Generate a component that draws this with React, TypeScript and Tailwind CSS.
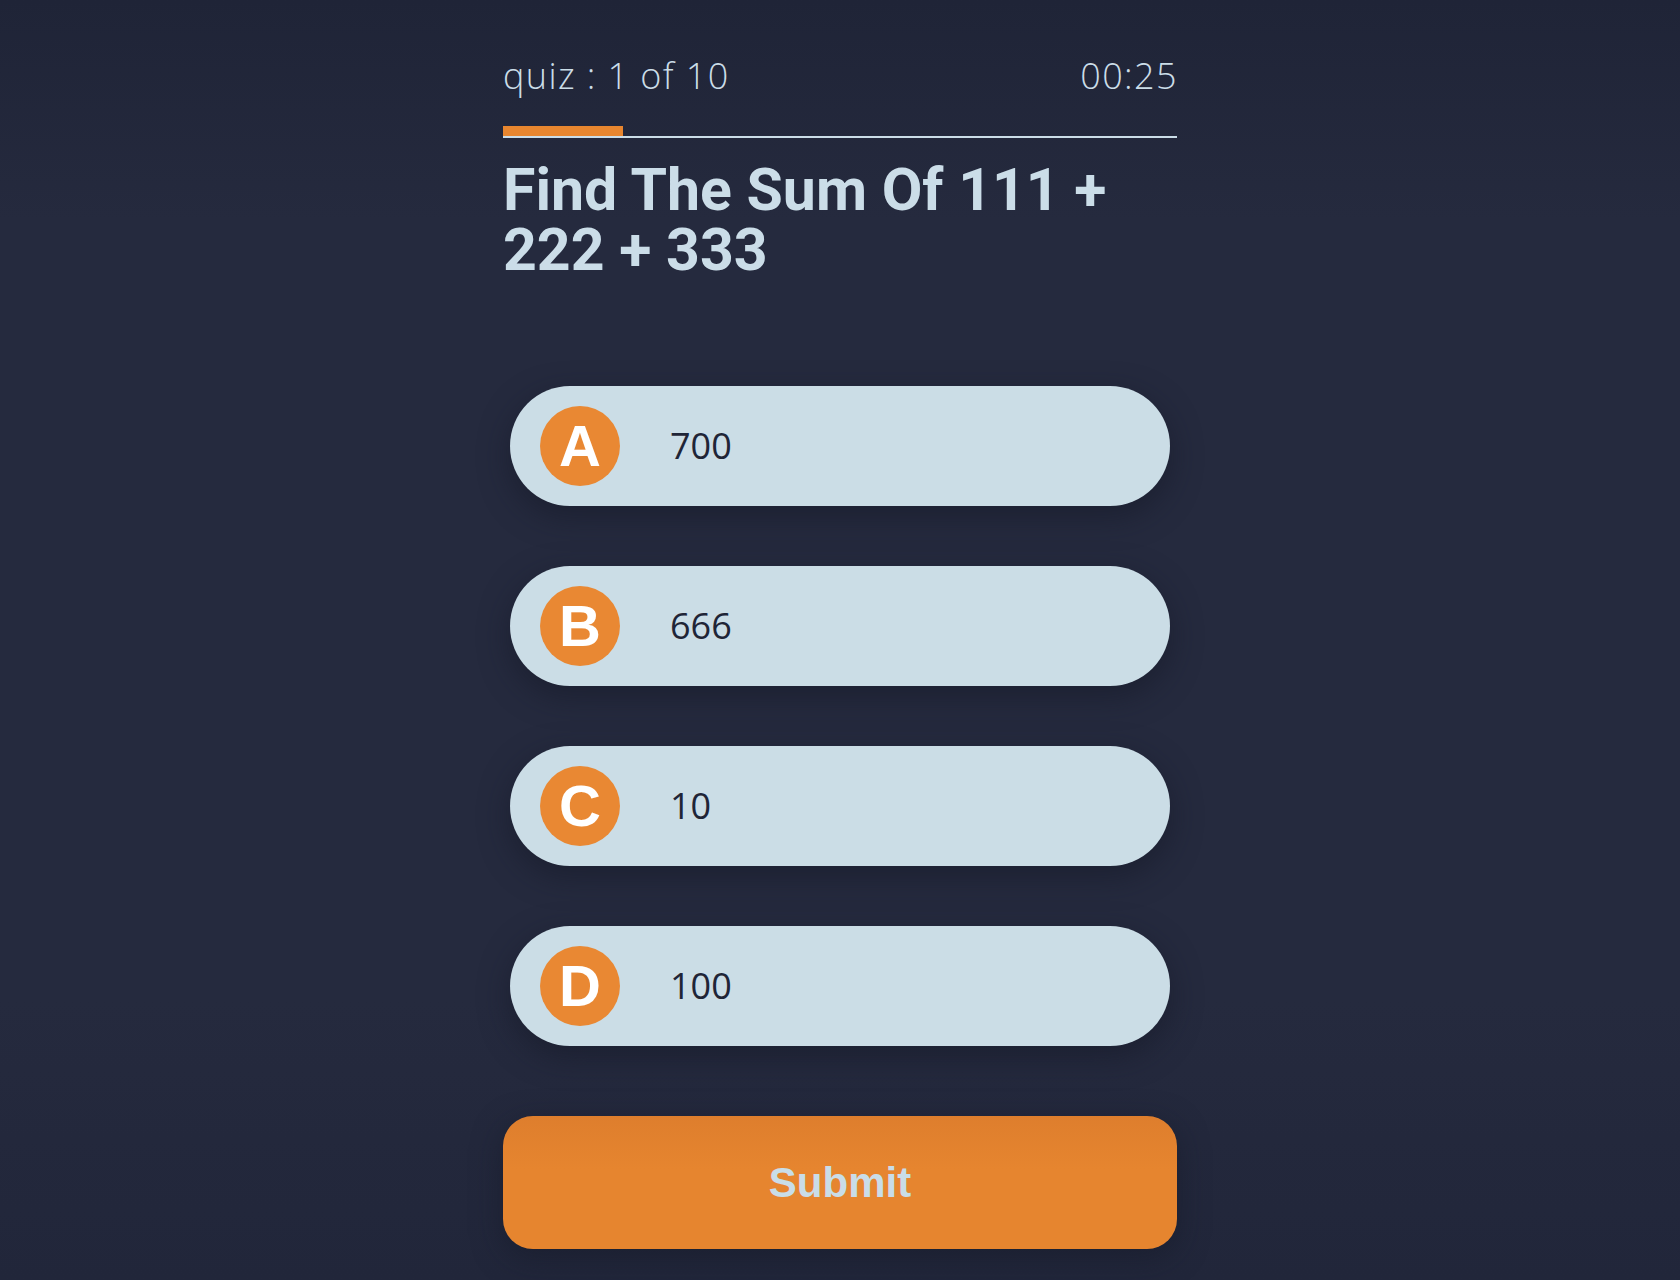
import React from "react"

const options = [
  { key: "A", text: "700" },
  { key: "B", text: "666" },
  { key: "C", text: "10" },
  { key: "D", text: "100" },
]

function Option({ letter, text }: { letter: string; text: string }) {
  return (
    <div className="flex items-center h-[120px] w-[660px] mx-auto pl-[30px] rounded-[60px] bg-[#cbdde6] shadow-[0_10px_30px_rgba(20,24,38,0.55)]">
      <div className="flex items-center justify-center w-[80px] h-[80px] rounded-full bg-[#e98833] text-white text-[58px] font-bold leading-none font-['Liberation_Sans',Arial,sans-serif]">
        {letter}
      </div>
      <span className="ml-[50px] text-[36px] leading-none text-[#1f2537] font-['Open_Sans',sans-serif]">{text}</span>
    </div>
  )
}

export default function App() {
  return (
    <div className="min-h-screen h-[1280px] bg-[linear-gradient(to_bottom,#1f2437_0px,#252a3e_220px,#252a3e_1000px,#21263a_1280px)]">
      <div className="w-[674px] mx-auto pt-[58px]">
        <div className="flex justify-between text-[36px] leading-[36px] font-light tracking-[1.4px] text-[#cbdde8] font-['Open_Sans',sans-serif]">
          <span>quiz : 1 of 10</span>
          <span className="-mr-[1px]">00:25</span>
        </div>

        <div className="mt-[32px] h-[12px] border-b-2 border-[#cbdde8]">
          <div className="w-[120px] h-[10px] bg-[#e8862f]" />
        </div>

        <h1 className="mt-[22px] text-[59px] leading-[60px] font-bold text-[#cbdde8] font-['Roboto',sans-serif]">
          Find The Sum Of 111 + 222 + 333
        </h1>

        <div className="mt-[106px] flex flex-col gap-[60px]">
          {options.map((o) => (
            <Option key={o.key} letter={o.key} text={o.text} />
          ))}
        </div>

        <button className="mt-[70px] w-full h-[133px] rounded-[30px] bg-[linear-gradient(to_bottom,#de7e2d,#e6852f_40%)] text-[42px] font-bold text-[#c9dde8] font-['Liberation_Sans',Arial,sans-serif] shadow-[0_8px_30px_rgba(20,24,38,0.5)]">
          Submit
        </button>
      </div>
    </div>
  )
}
